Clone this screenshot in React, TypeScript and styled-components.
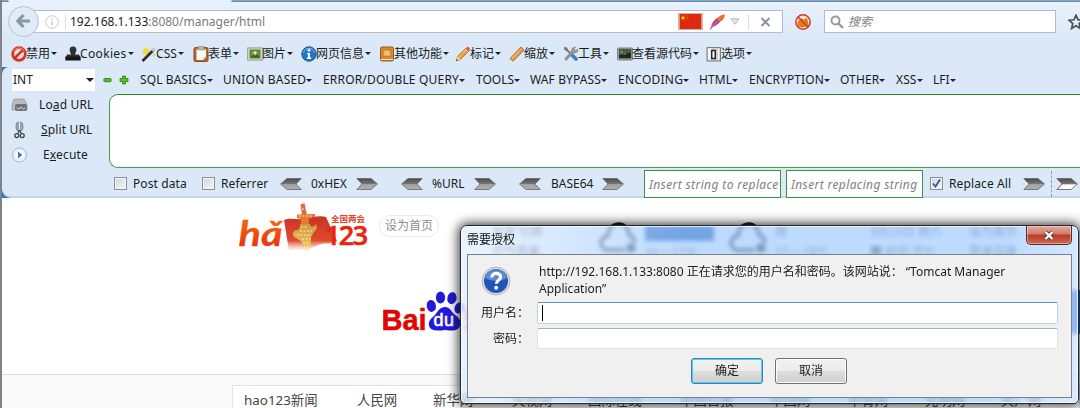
import React from "react";
import styled, { createGlobalStyle } from "styled-components";

const Global = createGlobalStyle`
  * { box-sizing: border-box; }
  body {
    margin: 0;
    overflow: hidden;
    background: #fff;
    color: #1c1c1c;
    font: 12px/16px "Noto Sans", "Noto Sans CJK SC", sans-serif;
  }
`;

const Window = styled.div`
  position: relative;
  width: 1080px;
  height: 408px;
  overflow: hidden;
  display: flex;
  flex-direction: column;
  border-left: 2px solid #7f8287;
`;

/* ---------- browser chrome ---------- */

const TabEdge = styled.div`
  flex: none;
  height: 2px;
  display: flex;
  background: linear-gradient(#8fb2d6, #5f80a6);
`;
const ActiveTab = styled.div`
  width: 224px;
  margin-left: 6px;
  border-radius: 0 0 4px 4px;
  background: #e6f0fa;
`;
const Chrome = styled.div`
  flex: none;
  height: 65px;
  background: linear-gradient(#e9f2fb, #dae8f7 36px);
`;
const NavBar = styled.div`
  height: 36px;
  padding: 0 0 0 6px;
  display: flex;
  align-items: center;
`;
const BackButton = styled.div`
  flex: none;
  z-index: 1;
  width: 31px;
  height: 31px;
  margin-top: 2px;
  border: 1px solid #b4c3d4;
  border-radius: 50%;
  background: #dfebf8;
  display: flex;
  align-items: center;
  justify-content: center;
`;
const UrlBar = styled.div`
  flex: none;
  width: 751px;
  height: 23px;
  margin: 3px 0 0 -7px;
  padding-left: 13px;
  border: 1px solid #aebccd;
  border-bottom-color: #b9bfc8;
  background: #fff;
  display: flex;
  align-items: center;
`;
const UrlText = styled.span`
  flex: 1;
  color: #7b7b7b;
  b { font-weight: 400; color: #1b1b1b; }
`;
const Rule = styled.i<{ $l: number; $r: number }>`
  width: 1px;
  height: 16px;
  margin: 0 ${(p) => p.$r}px 0 ${(p) => p.$l}px;
  background: #dcdfe3;
`;
const Flag = styled.svg`
  border: 1px solid #d9b3a8;
  margin-right: 6px;
`;
const BlockedIcon = styled.svg`
  flex: none;
  margin: 3px 12px 0 11px;
`;
const SearchBox = styled.div`
  flex: none;
  width: 232px;
  height: 23px;
  margin-top: 3px;
  padding-left: 5px;
  border: 1px solid #aebccd;
  background: #fff;
  display: flex;
  align-items: center;
  gap: 4px;
  color: #808080;
  font-style: italic;
`;
const Star = styled.svg`
  flex: none;
  margin: 3px 0 0 12px;
`;

const DevBar = styled.div`
  height: 29px;
  padding: 2px 0 0 9px;
  display: flex;
  align-items: center;
`;
const DevItem = styled.div<{ $w: number }>`
  flex: none;
  width: ${(p) => p.$w}px;
  display: flex;
  align-items: center;
  white-space: nowrap;
  svg { flex: none; margin-right: -1px; }
`;
const DevText = styled.span<{ $ls: number }>`
  letter-spacing: ${(p) => p.$ls}px;
`;
const Caret = styled.i<{ $s: number }>`
  flex: none;
  margin-left: 1px;
  border: ${(p) => p.$s}px solid transparent;
  border-top-color: #222;
  border-bottom: 0;
`;

/* ---------- hackbar ---------- */

const HackWrap = styled.div`
  flex: none;
  height: 131px;
  background: #2f76c9;
`;
const HackBar = styled.div`
  height: 131px;
  padding-top: 2px;
  border-bottom: 2px solid #c8d5e6;
  border-radius: 7px 0 0 9px;
  background: #dae8f7;
  display: flex;
  flex-direction: column;
`;
const SqlRow = styled.div`
  height: 22px;
  padding-left: 10px;
  display: flex;
  align-items: center;
`;
const TypeSelect = styled.div`
  width: 83px;
  height: 22px;
  padding: 0 1px 0 1px;
  background: #fff;
  display: flex;
  align-items: center;
  justify-content: space-between;
`;
const Signs = styled.svg`
  margin: 0 11px 0 8px;
`;
const SqlItem = styled.div<{ $w: number; $ls?: number }>`
  flex: none;
  width: ${(p) => p.$w}px;
  letter-spacing: ${(p) => p.$ls || 0}px;
  display: flex;
  align-items: center;
  white-space: nowrap;
  i { margin-left: 0; }
`;
const Editor = styled.div`
  display: flex;
  height: 78px;
`;
const Actions = styled.div`
  width: 107px;
  padding: 1px 0 0 9px;
  letter-spacing: 0.15px;
`;
const Action = styled.div<{ $gap: number }>`
  height: 25px;
  display: flex;
  align-items: center;
  svg { margin-right: ${(p) => p.$gap}px; }
`;
const QueryArea = styled.div`
  flex: 1;
  height: 74px;
  margin: 3px -2px 0 0;
  border: 1.5px solid #3da23d;
  border-top-color: #1f8a25;
  border-right: 0;
  border-radius: 9px 0 0 9px;
  background: #fff;
`;
const EncodeRow = styled.div`
  height: 27px;
  padding: 2px 0 0 112px;
  display: flex;
  align-items: center;
`;
const Check = styled.div`
  flex: none;
  width: 13px;
  height: 13px;
  border: 1px solid #8c9096;
  background: linear-gradient(135deg, #cfd3d8, #f8f8f8);
  box-shadow: inset 0 0 0 1px #f4f4f4;
  display: flex;
`;
const Label = styled.span<{ $l: number; $w: number; $ls?: number }>`
  flex: none;
  margin-left: ${(p) => p.$l}px;
  width: ${(p) => p.$w}px;
  letter-spacing: ${(p) => p.$ls || 0}px;
  white-space: nowrap;
`;
const Field = styled.div<{ $ml: number }>`
  flex: none;
  width: 137px;
  height: 28px;
  margin-left: ${(p) => p.$ml}px;
  padding: 6px 0 0 4px;
  border: 1.5px solid #35963d;
  background: #fff;
  color: #808080;
  font-style: italic;
  letter-spacing: 0.38px;
  white-space: nowrap;
`;
const Dashes = styled.i`
  height: 26px;
  margin: 0 4px 0 6px;
  border-left: 1px dashed #8f98a3;
`;

/* ---------- web page ---------- */

const Page = styled.div`
  flex: 1;
  display: flex;
  flex-direction: column;
  background: #fff;
`;
const Header = styled.div`
  height: 62px;
  padding: 4px 0 0 236px;
  display: flex;
  align-items: flex-start;
`;
const Pill = styled.div`
  width: 60px;
  height: 22px;
  margin: 13px 0 0 9px;
  border: 1px solid #ebebeb;
  border-radius: 11px;
  color: #8f8f8f;
  line-height: 20px;
  text-align: center;
`;
const Weather = styled.div`
  margin: 20px 0 0 53px;
  display: flex;
  color: #555;
  line-height: 20px;
`;
const WeatherCell = styled.div<{ $w: number }>`
  width: ${(p) => p.$w}px;
  white-space: nowrap;
`;
const Badge = styled.div`
  width: 69px;
  height: 15px;
  margin: 4px 0 2px;
  background: #1048a8;
`;
const SearchRow = styled.div`
  height: 114px;
  padding: 30px 0 0 381px;
  display: flex;
  justify-content: space-between;
`;
const SearchButton = styled.div`
  width: 24px;
  height: 44px;
  background: #2065cf;
`;
const LinksBand = styled.div`
  flex: 1;
  padding: 10px 0 0 230px;
  border-top: 1px solid #d5dfee;
  background: #f9f9fa;
`;
const Links = styled.div`
  height: 40px;
  padding: 4px 0 0 11px;
  border: 1px solid #dfe3ef;
  background: #fff;
  color: #444;
  font-size: 13.4px;
  line-height: 20px;
  display: flex;
`;
const LinkItem = styled.span<{ $w: number }>`
  flex: none;
  width: ${(p) => p.$w}px;
  white-space: nowrap;
`;

/* ---------- auth dialog ---------- */

const Dialog = styled.div`
  position: absolute;
  left: 458px;
  top: 225px;
  width: 619px;
  height: 179px;
  padding: 0 6px 6px;
  border: 1px solid #23282e;
  border-radius: 7px 7px 5px 5px;
  background: linear-gradient(100deg, rgba(226, 240, 255, 0.7), rgba(160, 204, 255, 0.7) 35%, rgba(160, 204, 255, 0.7) 85%, rgba(205, 228, 255, 0.7));
  backdrop-filter: blur(2px);
  box-shadow: inset 0 0 0 1px rgba(255, 255, 255, 0.75), 0 0 11px 2px rgba(0, 0, 0, 0.75);
`;
const TitleBar = styled.div`
  height: 28px;
  display: flex;
  justify-content: space-between;
  color: #111;
  line-height: 27px;
`;
const CloseButton = styled.div`
  width: 46px;
  height: 19px;
  border: 1px solid #5d2a2a;
  border-top: 0;
  border-radius: 0 0 5px 5px;
  background: linear-gradient(#e3a89b, #d27a6a 45%, #b93a26 50%, #cf6a50);
  box-shadow: inset 0 0 0 1px rgba(255, 255, 255, 0.4);
  display: flex;
  align-items: center;
  justify-content: center;
`;
const DialogBody = styled.div`
  height: 144px;
  border: 1px solid #77808b;
  background: #f0f0f0;
`;
const Prompt = styled.div`
  height: 47px;
  padding: 9px 0 0 13px;
  display: flex;
`;
const Message = styled.div`
  width: 500px;
  margin-left: 28px;
  line-height: 16.5px;
`;
const FormRow = styled.div<{ $h: number }>`
  height: ${(p) => p.$h}px;
  display: flex;
`;
const FormLabel = styled.div`
  width: 61px;
  margin-right: 8px;
  text-align: right;
  line-height: 22px;
`;
const Input = styled.div<{ $focus?: boolean }>`
  width: 521px;
  height: ${(p) => (p.$focus ? 22 : 21)}px;
  padding: 2px 4px;
  border: 1px solid ${(p) => (p.$focus ? "#b5d3ea" : "#e0e2e7")};
  border-top-color: ${(p) => (p.$focus ? "#5a94c8" : "#abadb3")};
  border-radius: 2px;
  background: #fff;
`;
const Cursor = styled.i`
  display: block;
  width: 1px;
  height: 16px;
  background: #000;
`;
const Buttons = styled.div`
  padding: 4px 0 0 223px;
  display: flex;
  gap: 12px;
`;
const Button = styled.div<{ $primary?: boolean }>`
  width: 72px;
  height: 26px;
  border: 1px solid ${(p) => (p.$primary ? "#3c7fb1" : "#707070")};
  border-radius: 3px;
  background: linear-gradient(#f2f2f2, #ebebeb 49%, #dddddd 50%, #cfcfcf);
  box-shadow: inset 0 0 0 1px ${(p) => (p.$primary ? "#48d0f2" : "#fcfcfc")};
  line-height: 24px;
  text-align: center;
`;

/* ---------- drawings ---------- */

const icons: Record<string, React.ReactNode> = {
  ban: (<>
    <circle cx="8" cy="8" r="6.300" fill="#f3e3df" stroke="#d8331f" strokeWidth="2.800" />
    <path d="M3.800 12L12 3.800" stroke="#d8331f" strokeWidth="2.600" />
    <path d="M2.500 5.500a6 6 0 0 1 11 0" fill="none" stroke="#f28a72" strokeWidth="1" />
  </>),
  stamp: (<>
    <path d="M4.600 4a3.400 3.400 0 0 1 6.800 0c0 2-1.400 3-1.400 4.500h4L15.500 12H.5L2 8.500h4C6 7 4.600 6 4.600 4z" fill="#303030" />
    <rect x=".3" y="10.500" width="15.400" height="4" rx=".6" fill="#171717" />
  </>),
  wand: (<>
    <path d="M5 .5l1 3 3-.8-1.500 2.600L10 7 7 7.200 6.500 10 4.500 7.700 2 9l.7-2.900L0 5l2.900-.9L3 1.500l1.500 1.200z" fill="#f7d43a" />
    <path d="M1.500 15L13 3.500" stroke="#2c2c2c" strokeWidth="2.600" /><path d="M11.300 5.200L14 2.500" stroke="#c9c9c9" strokeWidth="2.600" />
    <circle cx="13" cy="9" r="1.200" fill="#f4cf3b" />
  </>),
  clip: (<>
    <rect x="1" y="1.500" width="14" height="14" rx="1.500" fill="#b9662b" stroke="#8c481a" />
    <path d="M3.500 3.500h9.500v7.500l-3 3H3.500z" fill="#f7f7f7" /><path d="M13 11h-3v3z" fill="#cfcfcf" />
    <rect x="5" y="0" width="6" height="4" rx="1" fill="#b7b7b7" stroke="#777" strokeWidth=".5" />
  </>),
  image: (<>
    <rect x=".8" y="2" width="14.400" height="12" fill="#f1f1e6" stroke="#8a8f78" />
    <rect x="3" y="4" width="10" height="8" fill="#6c9a3b" stroke="#4d6f2a" /><path d="M3.500 11.500l3-3 2 1.500 2-2 2 3.500z" fill="#356023" /><circle cx="8" cy="6.800" r="1.600" fill="#e9efb5" />
  </>),
  info: (<>
    <circle cx="8" cy="8" r="7.200" fill="#2277cc" stroke="#155497" /><path d="M2.500 6.500a5.700 5.700 0 0 1 11 0" fill="none" stroke="#82b8ec" />
    <circle cx="8" cy="4.300" r="1.400" fill="#fff" /><path d="M6 7h3v4.500h1.200V13H5.800v-1.500H7V8.300H6z" fill="#fff" />
  </>),
  book: (<>
    <rect x="1.500" y="1" width="13" height="14" rx="1.500" fill="#d58a2d" stroke="#99591a" /><path d="M2 13.500h12" stroke="#f5e6c4" />
    <rect x="4" y="4" width="8" height="6.500" fill="#e9a94f" stroke="#bd7426" strokeWidth=".7" /><path d="M5.500 6h5M5.500 8h5" stroke="#f7d79c" />
  </>),
  pencil: (<>
    <path d="M1 15l1.500-4.500L11 2l3 3-8.500 8.500z" fill="#ee962c" stroke="#b66a1c" strokeWidth=".7" />
    <path d="M3.700 11.700L12 3.300" stroke="#ffd08a" /><path d="M1 15l1.500-4.500 3 3z" fill="#f3d6ad" /><path d="M1 15l.7-2 1.300 1.300z" fill="#333" />
    <path d="M10.500 2.500L12 1c1-.8 3.800 1.600 3 3l-1.500 1.500z" fill="#d95b5b" /><path d="M10 3l3 3" stroke="#ddd" />
  </>),
  ruler: (<><path d="M1 12.500L12 1l3.200 3L4 15.300z" fill="#dc9443" stroke="#a7642a" strokeWidth=".8" /><path d="M3 12.500L12.500 2.800" stroke="#f1bd7d" strokeWidth="1.200" /></>),
  tools: (<>
    <path d="M8.500 8.500l4.500 4.500" stroke="#3d7dcc" strokeWidth="3.800" strokeLinecap="round" /><path d="M2 2l7 7" stroke="#777" strokeWidth="1.800" />
    <path d="M3 13l8-8.500" stroke="#8b9096" strokeWidth="2.800" strokeLinecap="round" />
    <path d="M14.800 3.200l-2.600 1.600-1.600-1.400L12.500 1a4 4 0 0 0-4 4.500 4 4 0 0 0 5 1c1.400-.8 1.800-2 1.300-3.300z" fill="#9da2a8" stroke="#666" strokeWidth=".5" />
    <path d="M1 1l3 .5 1 2-1.500 1.500-2-1z" fill="#777" />
  </>),
  terminal: (<>
    <rect x=".6" y="2" width="15" height="12" rx="1" fill="#a7a7a7" stroke="#666" strokeWidth=".8" /><rect x="2" y="3.400" width="12.200" height="9" fill="#1e2a20" />
    <path d="M2 3.400h12.200v3L2 9z" fill="#4a5a4b" /><path d="M3.500 5l2 1.200-2 1.200M6.500 8h2.500" stroke="#63d14b" fill="none" strokeWidth=".9" />
  </>),
  options: (<>
    <rect x="1" y="1.500" width="13.500" height="13.500" fill="#d2d2d2" stroke="#7d7d7d" />
    <path d="M2 2.500h4v11H2z" fill="#f4f4f4" /><path d="M5.700 12.500V4.500h3.600v8z" fill="#fff" stroke="#222" strokeWidth="1.500" /><path d="M12.500 3v10.500" stroke="#f6f6f6" />
  </>),
};

const Icon = ({ name }: { name: string }) => (
  <svg width="16" height="16" viewBox="0 0 16 16">{icons[name]}</svg>
);

const Ribbon = ({ flip, light }: { flip?: boolean; light?: boolean }) => (
  <svg width="22" height="12" viewBox="0 0 22 12" style={{ flex: "none" }}>
    <defs>
      <linearGradient id="rib" x2="0" y2="1">
        <stop offset="0" stopColor="#4b4b4b" /><stop offset=".5" stopColor="#777" /><stop offset=".55" stopColor="#a4a4a4" /><stop offset="1" stopColor="#b0b0b0" />
      </linearGradient>
    </defs>
    <g transform={flip ? "translate(22 0) scale(-1 1)" : undefined}>
      <path d="M.8.500H15l6.500 5.500L15 11.500H.8L6 6z" fill="url(#rib)" stroke="#666" strokeWidth=".8" />
      {light && <path d="M2.500 11L6.500 6.500h13.800L15 11z" fill="#fff" />}
    </g>
  </svg>
);

const HaoLogo = () => (
  <svg width="132" height="54" viewBox="238 202 132 54">
    <defs>
      <linearGradient id="hao" x2="0" y2="1"><stop offset="0" stopColor="#f57a0c" /><stop offset="1" stopColor="#e8280d" /></linearGradient>
      <linearGradient id="fade" x2="0" y2="1"><stop offset="0" stopColor="#d09a45" /><stop offset=".65" stopColor="#e9b955" /><stop offset="1" stopColor="#fff3d8" stopOpacity="0" /></linearGradient>
      <linearGradient id="flagred" x2="0" y2="1"><stop offset="0" stopColor="#cc3322" /><stop offset=".7" stopColor="#e04a30" /><stop offset="1" stopColor="#f08a70" stopOpacity="0" /></linearGradient>
    </defs>
    <path d="M284 220c6-3 13 0 20-1s14-4 22-2l11 24c-7 4-13 1-19 4-5 3-10 4-16 4l-13 2z" fill="url(#flagred)" />
    <path d="M300.500 204.500l4-1.500 2.500 12h-5z" fill="#dd6a48" /><path d="M297 214.500l18-.5v3l-6 1v6h-8v-5l-4-1z" fill="#df7a35" />
    <path d="M300 224h10c0 3 3 4 6 0 2 4 0 6-2 8l-3 5v8l-2 9h-5l-2-12c-3-2-5-4-8-5-2-3-1-6 2-7 3 0 4-1 4-6z" fill="url(#fade)" />
    <path d="M301 227h7m-8 4h12m-15 4h14m-9 4h9m-8 4h7m-6 4h5M299 216h14M302 209h4" stroke="#fdeeb0" strokeWidth="1.100" strokeDasharray="2 1.500" />
    <text x="238.500" y="245.500" fontSize="35" fontFamily="Lato" fontWeight="700" fontStyle="italic" textLength="44" lengthAdjust="spacingAndGlyphs" fill="url(#hao)" stroke="#ee4d0c" strokeWidth=".3">hǎ</text>
    <text x="325" y="245" fontSize="27" fontFamily="Open Sans" fontWeight="600" fill="#e9250c" stroke="#e9250c" strokeWidth=".6" letterSpacing="-1.600">123</text>
    <text x="331" y="221.500" fontSize="8.500" fontWeight="700" fontFamily="Noto Sans CJK SC" fill="#e1472a">全国两会</text>
  </svg>
);

const BaiduLogo = () => (
  <svg width="90" height="44" viewBox="383 290 90 44">
    <text x="381.500" y="329.500" fontSize="29" fontWeight="700" fontFamily="Liberation Sans" fill="#e10601" stroke="#e10601" strokeWidth=".5">Bai</text>
    <g fill="#2319dc">
      <ellipse cx="431.300" cy="306" rx="4.600" ry="6" transform="rotate(-10 431 306)" />
      <ellipse cx="440.500" cy="297.500" rx="4.600" ry="6" />
      <ellipse cx="452" cy="298.200" rx="4.600" ry="6" transform="rotate(12 452 298)" />
      <ellipse cx="459" cy="308" rx="4.300" ry="5.600" transform="rotate(20 459 308)" />
      <path d="M445 307c5 0 6 4 9 7 4 3 8 6 6 12-2 5-7 5-15 4-8 1-14 1-16-4-1-6 3-8 6-11 3-4 5-8 10-8z" />
    </g>
    <text x="433.500" y="326" fontSize="18" fontFamily="Liberation Sans" fill="#fff" stroke="#fff" strokeWidth=".6" letterSpacing=".5">du</text>
    <path d="M466 312h7M466 318h7M466 328h7" stroke="#e10601" strokeWidth="4" />
  </svg>
);

const Cloud = () => (
  <svg width="38" height="34" viewBox="0 0 38 34" fill="none" stroke="#222" strokeWidth="3.400">
    <path d="M9 28a7 7 0 0 1 0-14C9 6 14 2 20 2s10 5 10 11c4 1 6 4 5 8M9 28h17" /><circle cx="32" cy="26" r="3" fill="#222" />
  </svg>
);

const devItems: [string, string, number, number][] = [
  ["ban", "禁用", 54, 0], ["stamp", "Cookies", 76, 0.35], ["wand", "CSS", 52, 0.1], ["clip", "表单", 54, 0],
  ["image", "图片", 54, 0], ["info", "网页信息", 78, 0], ["book", "其他功能", 76, 0], ["pencil", "标记", 54, 0],
  ["ruler", "缩放", 54, 0], ["tools", "工具", 54, 0], ["terminal", "查看源代码", 89, 0], ["options", "选项", 60, 0],
];
const sqlItems: [string, number, number][] = [
  ["SQL BASICS", 83, 0.1], ["UNION BASED", 100, 0.2], ["ERROR/DOUBLE QUERY", 153, 0.18], ["TOOLS", 54, 0],
  ["WAF BYPASS", 88, 0.12], ["ENCODING", 81, 0.25], ["HTML", 50, 0.1], ["ENCRYPTION", 91, 0.08],
  ["OTHER", 56, 0.1], ["XSS", 37, 0.1], ["LFI", 30, 0],
];
const links: [string, number][] = [
  ["hao123新闻", 113], ["人民网", 76], ["新华网", 79], ["央视网", 76], ["国际在线", 92],
  ["中国日报", 90], ["中国网", 78], ["中青网", 77], ["光明网", 76], ["央广网", 60],
];

export default function App() {
  return (
    <>
      <Global />
      <Window>
        <TabEdge><ActiveTab /></TabEdge>
        <Chrome>
          <NavBar>
            <BackButton>
              <svg width="15" height="14" viewBox="0 0 15 14"><path d="M7.500 1L2 7l5.500 6M2.500 7H14" fill="none" stroke="#8e979f" strokeWidth="3.200" /></svg>
            </BackButton>
            <UrlBar>
              <svg width="14" height="14" viewBox="0 0 14 14" fill="none" stroke="#c6c9cd" style={{ marginLeft: -1 }}><circle cx="7" cy="7" r="6.300" /><path d="M7 6v4.500M7 3.300v1.500" strokeWidth="1.400" /></svg>
              <Rule $l={6} $r={4} />
              <UrlText><b>192.168.1.133</b>:8080/manager/html</UrlText>
              <Flag width="25" height="17" viewBox="0 0 25 17">
                <rect width="25" height="17" fill="#de2910" />
                <path d="M4 1.500l.8 2 2 .1-1.600 1.300.6 2L4 5.800 2.200 6.900l.6-2L1.200 3.600l2-.1z" fill="#ffde00" />
                <path d="M8 1.500l1 1 .5 2-1 2" fill="none" stroke="#e8a013" strokeDasharray="1 1" />
              </Flag>
              <svg width="17" height="16" viewBox="0 0 17 16"><path d="M1 15.500L5 10" stroke="#a88bb5" strokeWidth="1.400" /><path d="M2 13.500C2.500 9 5 6 9 3.500L12.500 5.500C10 9.500 7 12 2 13.500z" fill="#b8336f" /><path d="M8 4.500C10.500 2 13 .5 16 .5c-.5 3.500-2 5.500-4.500 7z" fill="#ea6b25" /><path d="M3 12.500l8-8" stroke="#f0a9c8" strokeWidth=".8" /></svg>
              <svg width="10" height="7" viewBox="0 0 10 7" style={{ marginLeft: 4 }}><path d="M.8.800h8.400L5 6.300z" fill="#e0e5ea" stroke="#b2bbc5" /></svg>
              <Rule $l={8} $r={11} />
              <svg width="11" height="10" viewBox="0 0 11 10" style={{ marginRight: 11 }}><path d="M1.500 1l8 8M9.500 1l-8 8" stroke="#8795a3" strokeWidth="2" /></svg>
            </UrlBar>
            <BlockedIcon width="18" height="18" viewBox="0 0 18 18">
              <circle cx="9" cy="9" r="7.500" fill="#f2e3dc" />
              <path d="M3.500 10c0-3 3-3 4-5l2 1.500 3-1.500c1 2 2.500 4 1.500 7-2 2.500-7 3-10 1z" fill="#d9820f" />
              <circle cx="9" cy="9" r="7.200" fill="none" stroke="#cf3535" strokeWidth="1.500" /><path d="M3.800 3.800l10.400 10.400" stroke="#cf3535" strokeWidth="1.500" />
            </BlockedIcon>
            <SearchBox>
              <svg width="14" height="14" viewBox="0 0 14 14" fill="none" stroke="#9a9a9a"><circle cx="5.500" cy="5.500" r="4" strokeWidth="2" /><path d="M8.500 8.500l4.500 4.500" strokeWidth="2.400" /></svg>
              搜索
            </SearchBox>
            <Star width="16" height="16" viewBox="0 0 16 16"><path d="M8 1.200l2 4.600 5 .4-3.800 3.300 1.200 4.900L8 11.800l-4.400 2.600 1.200-4.900L1 6.200l5-.4z" fill="none" stroke="#4a5158" strokeWidth="1.700" /></Star>
          </NavBar>
          <DevBar>
            {devItems.map(([icon, text, w, ls]) => (
              <DevItem key={text} $w={w}><Icon name={icon} /><DevText $ls={ls}>{text}</DevText><Caret $s={3.5} /></DevItem>
            ))}
          </DevBar>
        </Chrome>

        <HackWrap>
          <HackBar>
            <SqlRow>
              <TypeSelect>INT<Caret $s={4} /></TypeSelect>
              <Signs width="26" height="10" viewBox="0 0 26 10" fill="#57bd1c" stroke="#2c7d12" strokeWidth=".8">
                <rect x=".8" y="3.500" width="7.400" height="3.200" rx="1" />
                <path d="M19.500 1h3v2.500H25v3h-2.500V9h-3V6.500H17v-3h2.500z" />
              </Signs>
              {sqlItems.map(([text, w, ls]) => (
                <SqlItem key={text} $w={w} $ls={ls}>{text}<Caret $s={3} /></SqlItem>
              ))}
            </SqlRow>
            <Editor>
              <Actions>
                <Action $gap={11}>
                  <svg width="17" height="16" viewBox="0 0 17 16"><path d="M3 2h10l3 5v6H1V7z" fill="#b9bcbe" stroke="#8d8d8d" strokeWidth=".6" /><rect x="4" y="7" width="12" height="7" rx="2" fill="#6f7173" /><path d="M6 10.500a1.500 1.500 0 1 0 3 0h2a1.500 1.500 0 1 0 3 0" fill="none" stroke="#ddd" /></svg>
                  <span>Lo<u>a</u>d URL</span>
                </Action>
                <Action $gap={13}>
                  <svg width="17" height="18" viewBox="0 0 17 18"><rect x="5" y="1" width="7" height="9" rx="3" fill="#8fa9b5" stroke="#6b8794" strokeWidth=".7" /><path d="M8.500 1v9" stroke="#dce8ee" /><path d="M8.500 9l-2 4M8.500 9l2 4" stroke="#444" strokeWidth="1.300" /><circle cx="5.800" cy="14.600" r="2" fill="none" stroke="#444" strokeWidth="1.300" /><circle cx="11.200" cy="14.600" r="2" fill="none" stroke="#444" strokeWidth="1.300" /></svg>
                  <span><u>S</u>plit URL</span>
                </Action>
                <Action $gap={15}>
                  <svg width="17" height="16" viewBox="0 0 17 16"><circle cx="8.500" cy="8" r="7" fill="#f3f8fd" stroke="#9eb5d2" /><circle cx="8.500" cy="8" r="5" fill="#fff" stroke="#dbe6f2" /><path d="M7 4.500L11.300 8 7 11.500z" fill="#2f7ad2" /></svg>
                  <span>E<u>x</u>ecute</span>
                </Action>
              </Actions>
              <QueryArea />
            </Editor>
            <EncodeRow>
              <Check /><Label $l={6} $w={69} $ls={0.1}>Post data</Label>
              <Check /><Label $l={6} $w={59} $ls={0.1}>Referrer</Label>
              <Ribbon flip /><Label $l={9} $w={45}>0xHEX</Label><Ribbon />
              <Label $l={0} $w={23} /><Ribbon flip /><Label $l={9} $w={42}>%URL</Label><Ribbon />
              <Label $l={0} $w={23} /><Ribbon flip /><Label $l={10} $w={51}>BASE64</Label><Ribbon />
              <Field $ml={20}>Insert string to replace</Field>
              <Field $ml={5}>Insert replacing string</Field>
              <Label $l={0} $w={7} />
              <Check><svg width="11" height="11" viewBox="0 0 11 11"><path d="M2 5.500l2.500 3L9 1.500" fill="none" stroke="#3a53a4" strokeWidth="1.800" /></svg></Check>
              <Label $l={6} $w={74} $ls={0.12}>Replace All</Label>
              <Ribbon /><Dashes /><Ribbon light />
            </EncodeRow>
          </HackBar>
        </HackWrap>

        <Page>
          <Header>
            <HaoLogo />
            <Pill>设为首页</Pill>
            <Weather>
              <WeatherCell $w={107}>北京 切换<br />空气质量</WeatherCell>
              <WeatherCell $w={46}><Cloud /></WeatherCell>
              <WeatherCell $w={84}><Badge />10 ~ 17℃</WeatherCell>
              <WeatherCell $w={46}><Cloud /></WeatherCell>
              <WeatherCell $w={95}>周<br />17 ~ 19℃</WeatherCell>
              <WeatherCell $w={99}>3月23日 周六<br />■ 农历 廿七</WeatherCell>
              <WeatherCell $w={60}>设为首页<br />登录百度</WeatherCell>
            </Weather>
          </Header>
          <SearchRow><BaiduLogo /><SearchButton /></SearchRow>
          <LinksBand>
            <Links>{links.map(([t, w]) => <LinkItem key={t} $w={w}>{t}</LinkItem>)}</Links>
          </LinksBand>
        </Page>

        <Dialog>
          <TitleBar>
            需要授权
            <CloseButton>
              <svg width="12" height="11" viewBox="0 0 12 11"><path d="M2.500 2l7 7M9.500 2l-7 7" stroke="#5b3a3a" strokeWidth="4" /><path d="M2.500 2l7 7M9.500 2l-7 7" stroke="#fff" strokeWidth="2.400" /></svg>
            </CloseButton>
          </TitleBar>
          <DialogBody>
            <Prompt>
              <svg width="30" height="34" viewBox="0 0 30 34">
                <circle cx="15" cy="17" r="14" fill="#d9dbdd" stroke="#b4b7ba" /><circle cx="15" cy="17" r="12" fill="#1f55b5" />
                <path d="M4 14a11.300 11.300 0 0 1 22 0c-6 4-15 4-22 0z" fill="#5e8ad3" />
                <path d="M10.800 13.500c0-5.500 8.800-5.200 8.800-.4 0 3-4.300 3.200-4.300 6.600" fill="none" stroke="#fff" strokeWidth="3.200" /><circle cx="15.200" cy="23.800" r="2" fill="#fff" />
              </svg>
              <Message>http://192.168.1.133:8080 正在请求您的用户名和密码。该网站说： “Tomcat Manager Application”</Message>
            </Prompt>
            <FormRow $h={26}><FormLabel>用户名：</FormLabel><Input $focus><Cursor /></Input></FormRow>
            <FormRow $h={26}><FormLabel>密码：</FormLabel><Input /></FormRow>
            <Buttons><Button $primary>确定</Button><Button>取消</Button></Buttons>
          </DialogBody>
        </Dialog>
      </Window>
    </>
  );
}
